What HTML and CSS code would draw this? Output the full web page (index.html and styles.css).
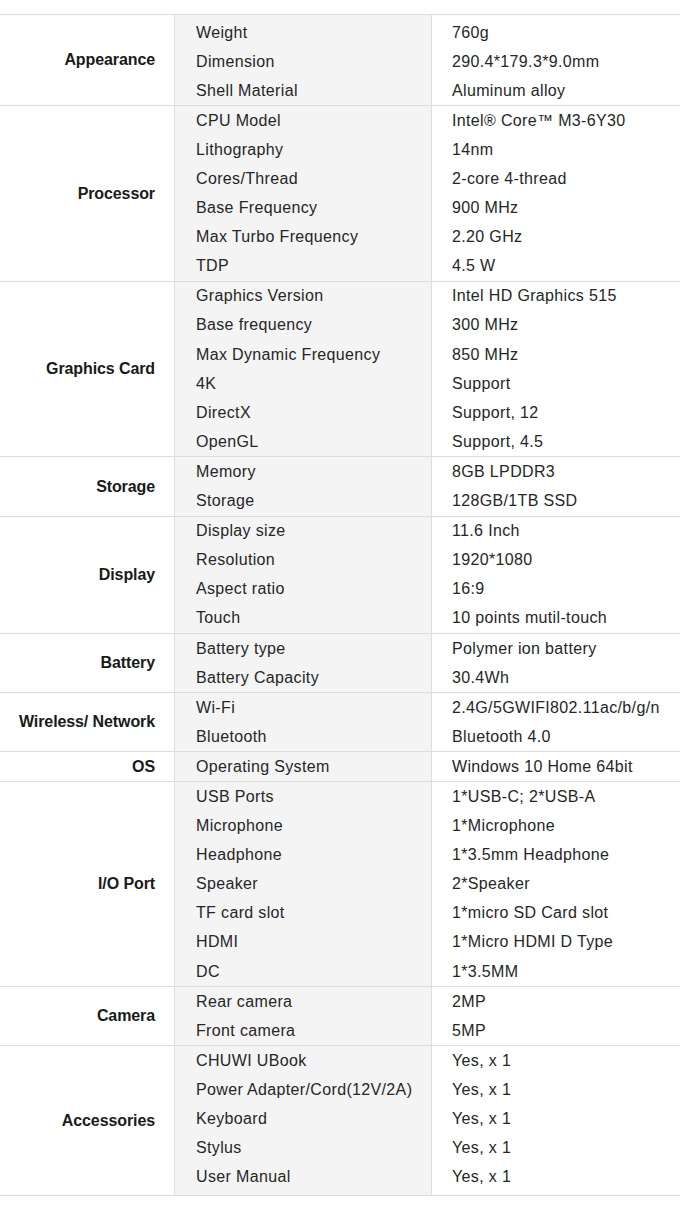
FILE: index.html
```html
<!DOCTYPE html>
<html>
<head>
<meta charset="utf-8">
<link rel="stylesheet" href="styles.css">
</head>
<body>
<div class="spec">
  <div class="group first">
    <div class="label">Appearance</div>
    <div class="keys"><div class="row">Weight</div><div class="row">Dimension</div><div class="row">Shell Material</div></div>
    <div class="vals"><div class="row">760g</div><div class="row">290.4*179.3*9.0mm</div><div class="row">Aluminum alloy</div></div>
  </div>
  <div class="group">
    <div class="label">Processor</div>
    <div class="keys"><div class="row">CPU Model</div><div class="row">Lithography</div><div class="row">Cores/Thread</div><div class="row">Base Frequency</div><div class="row">Max Turbo Frequency</div><div class="row">TDP</div></div>
    <div class="vals"><div class="row">Intel® Core™ M3-6Y30</div><div class="row">14nm</div><div class="row">2-core 4-thread</div><div class="row">900 MHz</div><div class="row">2.20 GHz</div><div class="row">4.5 W</div></div>
  </div>
  <div class="group">
    <div class="label">Graphics Card</div>
    <div class="keys"><div class="row">Graphics Version</div><div class="row">Base frequency</div><div class="row">Max Dynamic Frequency</div><div class="row">4K</div><div class="row">DirectX</div><div class="row">OpenGL</div></div>
    <div class="vals"><div class="row">Intel HD Graphics 515</div><div class="row">300 MHz</div><div class="row">850 MHz</div><div class="row">Support</div><div class="row">Support, 12</div><div class="row">Support, 4.5</div></div>
  </div>
  <div class="group">
    <div class="label">Storage</div>
    <div class="keys"><div class="row">Memory</div><div class="row">Storage</div></div>
    <div class="vals"><div class="row">8GB LPDDR3</div><div class="row">128GB/1TB SSD</div></div>
  </div>
  <div class="group">
    <div class="label">Display</div>
    <div class="keys"><div class="row">Display size</div><div class="row">Resolution</div><div class="row">Aspect ratio</div><div class="row">Touch</div></div>
    <div class="vals"><div class="row">11.6 Inch</div><div class="row">1920*1080</div><div class="row">16:9</div><div class="row">10 points mutil-touch</div></div>
  </div>
  <div class="group">
    <div class="label">Battery</div>
    <div class="keys"><div class="row">Battery type</div><div class="row">Battery Capacity</div></div>
    <div class="vals"><div class="row">Polymer ion battery</div><div class="row">30.4Wh</div></div>
  </div>
  <div class="group">
    <div class="label">Wireless/ Network</div>
    <div class="keys"><div class="row">Wi-Fi</div><div class="row">Bluetooth</div></div>
    <div class="vals"><div class="row">2.4G/5GWIFI802.11ac/b/g/n</div><div class="row">Bluetooth 4.0</div></div>
  </div>
  <div class="group">
    <div class="label">OS</div>
    <div class="keys"><div class="row">Operating System</div></div>
    <div class="vals"><div class="row">Windows 10 Home 64bit</div></div>
  </div>
  <div class="group">
    <div class="label">I/O Port</div>
    <div class="keys"><div class="row">USB Ports</div><div class="row">Microphone</div><div class="row">Headphone</div><div class="row">Speaker</div><div class="row">TF card slot</div><div class="row">HDMI</div><div class="row">DC</div></div>
    <div class="vals"><div class="row">1*USB-C; 2*USB-A</div><div class="row">1*Microphone</div><div class="row">1*3.5mm Headphone</div><div class="row">2*Speaker</div><div class="row">1*micro SD Card slot</div><div class="row">1*Micro HDMI D Type</div><div class="row">1*3.5MM</div></div>
  </div>
  <div class="group">
    <div class="label">Camera</div>
    <div class="keys"><div class="row">Rear camera</div><div class="row">Front camera</div></div>
    <div class="vals"><div class="row">2MP</div><div class="row">5MP</div></div>
  </div>
  <div class="group last">
    <div class="label">Accessories</div>
    <div class="keys"><div class="row">CHUWI UBook</div><div class="row">Power Adapter/Cord(12V/2A)</div><div class="row">Keyboard</div><div class="row">Stylus</div><div class="row">User Manual</div></div>
    <div class="vals"><div class="row">Yes, x 1</div><div class="row">Yes, x 1</div><div class="row">Yes, x 1</div><div class="row">Yes, x 1</div><div class="row">Yes, x 1</div></div>
  </div>
</div>
</body>
</html>
```
FILE: styles.css
```css
html, body {
  margin: 0;
  padding: 0;
  background: #ffffff;
}
body {
  padding-top: 14px;
  font-family: "Liberation Sans", Arial, sans-serif;
  color: #262626;
}
.spec {
  border-top: 1px solid #dcdcdc;
  width: 680px;
}
.group {
  display: grid;
  grid-template-columns: 175px 257px 248px;
  border-bottom: 1px solid #dcdcdc;
}
.label {
  display: flex;
  align-items: center;
  justify-content: flex-end;
  padding-right: 19px;
  font-weight: bold;
  font-size: 16px;
  letter-spacing: -0.1px;
  color: #1a1a1a;
  border-right: 1px solid #dcdcdc;
  white-space: nowrap;
}
.keys {
  background: #f4f4f4;
  border-right: 1px solid #dcdcdc;
  padding-left: 21px;
}
.vals {
  padding-left: 20px;
}
.row {
  height: 29.1px;
  display: flex;
  align-items: center;
  font-size: 16px;
  letter-spacing: 0.35px;
  white-space: nowrap;
}
.first .keys, .first .vals {
  padding-top: 3px;
}
.last .keys, .last .vals {
  padding-bottom: 3px;
}
```
